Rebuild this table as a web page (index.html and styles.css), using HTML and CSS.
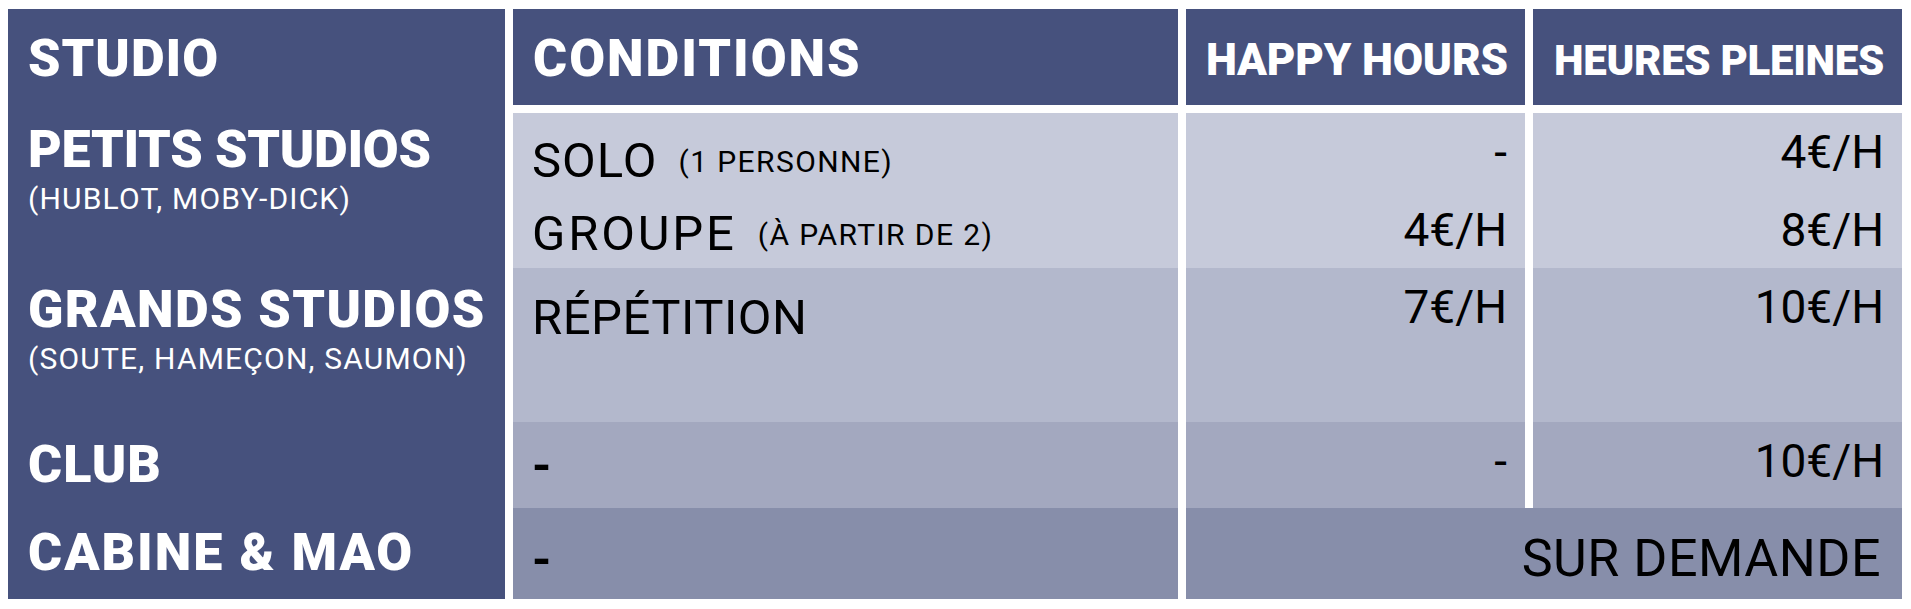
FILE: index.html
```html
<!DOCTYPE html>
<html lang="fr">
<head>
<meta charset="utf-8">
<title>Tarifs studios</title>
<link rel="stylesheet" href="styles.css">
</head>
<body>
<div class="pricing">
  <div class="studio-col"></div>

  <div class="cell head col-1 row-h">STUDIO</div>
  <div class="cell head head-wide col-2 row-h">CONDITIONS</div>
  <div class="cell head head-small num col-3 row-h">HAPPY HOURS</div>
  <div class="cell head head-small head-tight num col-4 row-h">HEURES PLEINES</div>

  <div class="cell name col-1 row-1"><div class="title title-tight">PETITS STUDIOS</div><div class="sub">(HUBLOT, MOBY-DICK)</div></div>
  <div class="cell cond band-1 col-2 row-1"><div class="line">SOLO <span class="note">(1 PERSONNE)</span></div><div class="line"><span class="wide">GROUPE</span> <span class="note">(À PARTIR DE 2)</span></div></div>
  <div class="cell num band-1 col-3 row-1"><div class="pline">-</div><div class="pline">4€/H</div></div>
  <div class="cell num band-1 col-4 row-1"><div class="pline">4€/H</div><div class="pline">8€/H</div></div>

  <div class="cell name col-1 row-2 pad-r2"><div class="title title-wide">GRANDS STUDIOS</div><div class="sub">(SOUTE, HAMEÇON, SAUMON)</div></div>
  <div class="cell cond band-2 col-2 row-2 pad-c2"><div class="line line-tight">RÉPÉTITION</div></div>
  <div class="cell num band-2 col-3 row-2"><div class="pline">7€/H</div></div>
  <div class="cell num band-2 col-4 row-2"><div class="pline">10€/H</div></div>

  <div class="cell name col-1 row-3 pad-r3"><div class="title">CLUB</div></div>
  <div class="cell cond band-3 col-2 row-3 pad-c3"><div class="line dash">-</div></div>
  <div class="cell num band-3 col-3 row-3"><div class="pline">-</div></div>
  <div class="cell num band-3 col-4 row-3"><div class="pline">10€/H</div></div>

  <div class="cell name col-1 row-4 pad-r4"><div class="title title-wider">CABINE &amp; MAO</div></div>
  <div class="cell cond band-4 col-2 row-4 pad-c4"><div class="line dash">-</div></div>
  <div class="cell num band-4 col-34 row-4 demand"><div class="dline">SUR DEMANDE</div></div>
</div>
</body>
</html>
```

FILE: styles.css
```css
html, body {
  background: #ffffff;
}

body {
  margin: 9px 8px 0 8px;
  font-family: Roboto, "Liberation Sans", Arial, sans-serif;
  color: #000;
}

.pricing {
  display: grid;
  grid-template-columns: 497px 665px 339px 369px;
  grid-template-rows: 96px 8px 155px 154px 86px 91px;
  column-gap: 8px;
  width: 1894px;
}

.studio-col {
  grid-column: 1;
  grid-row: 1 / -1;
  background: #46517d;
}

.cell {
  box-sizing: border-box;
  min-width: 0;
}

.col-1 { grid-column: 1; }
.col-2 { grid-column: 2; }
.col-3 { grid-column: 3; }
.col-4 { grid-column: 4; }
.col-34 { grid-column: 3 / 5; }

.row-h { grid-row: 1; }
.row-1 { grid-row: 3; }
.row-2 { grid-row: 4; }
.row-3 { grid-row: 5; }
.row-4 { grid-row: 6; }

.band-1 { background: #c6cada; }
.band-2 { background: #b3b8cc; }
.band-3 { background: #a3a8bf; }
.band-4 { background: #878eaa; }

/* header row */
.head {
  background: #46517d;
  color: #fff;
  font-weight: 900;
  font-size: 52px;
  line-height: 60px;
  padding: 20px 20px 0 20px;
  letter-spacing: 1px;
  white-space: nowrap;
}

.head.col-1 {
  background: transparent;
}

.head-wide {
  letter-spacing: 2px;
}

.head-small {
  font-size: 44px;
  padding-top: 21px;
  padding-right: 19px;
  letter-spacing: -0.2px;
}

.head-tight {
  font-size: 42px;
  padding-top: 22px;
  padding-right: 17px;
  letter-spacing: -0.3px;
}

/* first column */
.name {
  color: #fff;
  padding: 7px 10px 0 20px;
  white-space: nowrap;
}

.name .title {
  font-weight: 900;
  font-size: 52px;
  line-height: 60px;
  letter-spacing: 1px;
}

.name .title-tight {
  letter-spacing: -0.3px;
}

.name .title-wide {
  letter-spacing: 1.4px;
}

.name .title-wider {
  letter-spacing: 2px;
}

.name .sub {
  font-weight: 400;
  font-size: 30px;
  line-height: 38px;
  letter-spacing: 1.2px;
}

.pad-r2 { padding-top: 12px; }
.pad-r3 { padding-top: 13px; }
.pad-r4 { padding-top: 15px; }

/* conditions column */
.cond {
  padding: 12px 20px 0 19px;
  white-space: nowrap;
}

.cond .line {
  font-size: 49px;
  line-height: 72px;
  letter-spacing: 1px;
}

.cond .line-tight {
  letter-spacing: 0.5px;
}

.cond .wide {
  letter-spacing: 2.8px;
}

.cond .note {
  font-size: 30px;
  letter-spacing: 1.4px;
  margin-left: 8px;
  vertical-align: 5px;
}

.pad-c2 { padding-top: 14px; }
.pad-c3 { padding-top: 8px; }
.pad-c4 { padding-top: 16px; }

.dash {
  font-weight: 700;
}

/* price columns */
.num {
  text-align: right;
  padding-right: 18px;
}

.num .pline {
  font-size: 46px;
  line-height: 78px;
}

.demand {
  padding-top: 12px;
  padding-right: 21px;
}

.demand .dline {
  font-size: 52px;
  line-height: 78px;
  letter-spacing: 0.5px;
}
```
